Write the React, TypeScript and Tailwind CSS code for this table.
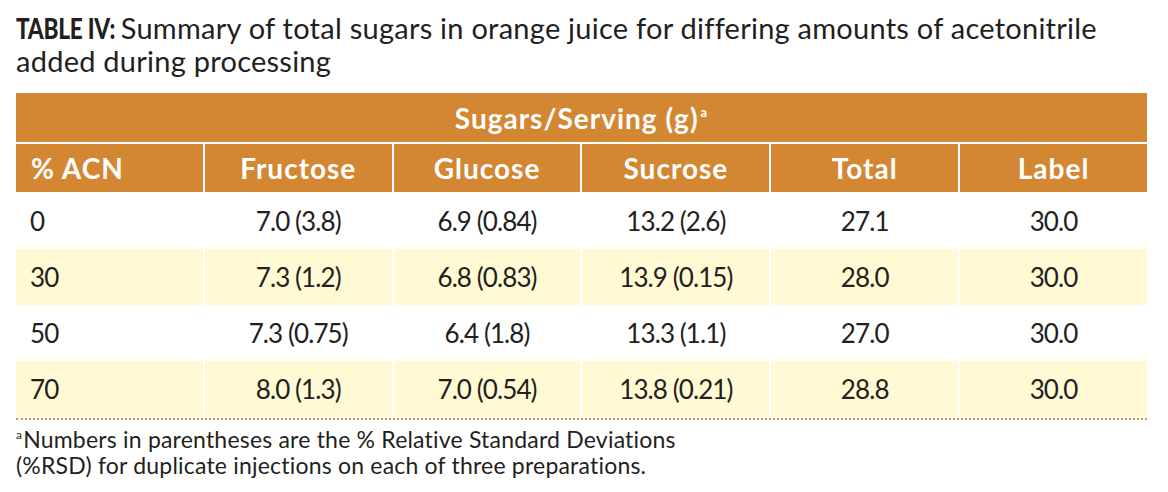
import React from "react";

const rows = [
  { acn: "0", f: "7.0 (3.8)", g: "6.9 (0.84)", s: "13.2 (2.6)", t: "27.1", l: "30.0", y: false },
  { acn: "30", f: "7.3 (1.2)", g: "6.8 (0.83)", s: "13.9 (0.15)", t: "28.0", l: "30.0", y: true },
  { acn: "50", f: "7.3 (0.75)", g: "6.4 (1.8)", s: "13.3 (1.1)", t: "27.0", l: "30.0", y: false },
  { acn: "70", f: "8.0 (1.3)", g: "7.0 (0.54)", s: "13.8 (0.21)", t: "28.8", l: "30.0", y: true },
];

export default function App() {
  return (
    <div
      className="w-[1168px] h-[492px] bg-white text-[#231f20] pl-[16px] pr-[21px] pt-[11px]"
      style={{ fontFamily: "Lato, 'Noto Sans', sans-serif" }}
    >
      <div className="text-[29px] leading-[33px] font-normal tracking-[0.25px]">
        <div className="whitespace-nowrap">
          <span className="inline-block origin-left scale-x-[0.78] mr-[-30px] font-black tracking-[-0.3px]">
            TABLE IV:
          </span>{" "}
          Summary of total sugars in orange juice for differing amounts of acetonitrile
        </div>
        <div className="whitespace-nowrap">added during processing</div>
      </div>

      <div className="mt-[16px] w-[1131px]">
        <div className="bg-[#d48732] h-[49px] flex items-center justify-center text-white font-bold text-[28px] tracking-[1px]">
          <span>
            Sugars/Serving (g)<sup className="text-[13px] top-[-12px] ml-[2px]">a</sup>
          </span>
        </div>
        <div className="grid grid-cols-6 gap-x-[2px] mt-[2px]">
          {["% ACN", "Fructose", "Glucose", "Sucrose", "Total", "Label"].map((h, i) => (
            <div
              key={h}
              className={`bg-[#d48732] h-[48px] flex items-center text-white font-bold text-[28px] tracking-[1px] ${
                i === 0 ? "justify-start pl-[15px]" : "justify-center"
              }`}
            >
              {h}
            </div>
          ))}
        </div>
        <div className="mt-[1px]">
          {rows.map((r) => (
            <div key={r.acn} className="grid grid-cols-6 gap-x-[2px] h-[56px]">
              {[r.acn, r.f, r.g, r.s, r.t, r.l].map((v, i) => (
                <div
                  key={i}
                  className={`${r.y ? "bg-[#fffad4]" : "bg-white"} flex items-center text-[26px] tracking-[-0.9px] ${
                    i === 0 ? "justify-start pl-[14px]" : "justify-center"
                  }`}
                >
                  {v}
                </div>
              ))}
            </div>
          ))}
        </div>
        <div className="border-b-2 border-dotted border-[#e0904a] mt-[1px]" />
      </div>

      <div className="mt-[6px] text-[23px] leading-[26px] tracking-[0.2px] text-[#231f20]">
        <div>
          <sup className="text-[12px] top-[-9px] mr-[1px]">a</sup>Numbers in parentheses are the % Relative Standard Deviations
        </div>
        <div>(%RSD) for duplicate injections on each of three preparations.</div>
      </div>
    </div>
  );
}
